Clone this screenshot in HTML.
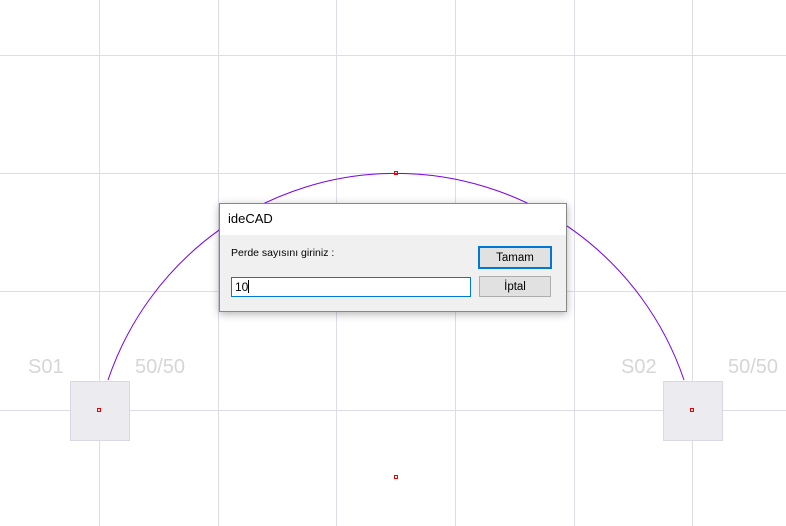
<!DOCTYPE html>
<html><head><style>
body{margin:0;width:786px;height:526px;overflow:hidden;background:#fff;font-family:"Liberation Sans",sans-serif;position:relative}
.t{position:absolute;font-size:20px;color:#d6d6d6;top:356px}
.dlg{position:absolute;left:219px;top:203px;width:346px;height:107px;border:1px solid #888;background:#f0f0f0;box-shadow:0 2px 8px rgba(0,0,0,.3)}
.tb{height:31px;background:#fff;font-size:13px;line-height:30px;padding-left:8px;color:#000}
.lbl{position:absolute;left:11px;top:43px;font-size:10.5px}
.btn{position:absolute;width:72px;height:21px;background:#e1e1e1;border:1px solid #adadad;box-sizing:border-box;font-size:11.5px;text-align:center;line-height:19px}
.inp{position:absolute;left:11px;top:73px;width:240px;height:20px;background:#fff;border:1px solid #0078d7;box-sizing:border-box;font-size:12px;line-height:18px;padding-left:3px}
.cur{display:inline-block;width:1px;height:13px;background:#000;vertical-align:-2px}
</style></head><body>
<svg width="786" height="526" style="position:absolute;left:0;top:0">
<g stroke="#dcdcec" stroke-width="1">
<line x1="99.5" y1="0" x2="99.5" y2="526"/><line x1="218.5" y1="0" x2="218.5" y2="526"/><line x1="336.5" y1="0" x2="336.5" y2="526"/><line x1="455.5" y1="0" x2="455.5" y2="526"/><line x1="574.5" y1="0" x2="574.5" y2="526"/><line x1="692.5" y1="0" x2="692.5" y2="526"/>
<line x1="0" y1="55.5" x2="786" y2="55.5"/><line x1="0" y1="173.5" x2="786" y2="173.5"/><line x1="0" y1="291.5" x2="786" y2="291.5"/><line x1="0" y1="410.5" x2="786" y2="410.5"/>
</g>
<rect x="70.5" y="381.5" width="59" height="59" fill="#ebebf0" stroke="#d8d8e6"/>
<rect x="663.5" y="381.5" width="59" height="59" fill="#ebebf0" stroke="#d8d8e6"/>
<path d="M108 380 A304 304 0 0 1 684 380" fill="none" stroke="#7a00e6" stroke-width="1"/>
<rect x="97.5" y="408.5" width="3" height="3" fill="none" stroke="#e00" stroke-width="1"/>
<rect x="690.5" y="408.5" width="3" height="3" fill="none" stroke="#e00" stroke-width="1"/>
<rect x="394.5" y="171.5" width="3" height="3" fill="none" stroke="#e00" stroke-width="1"/>
<rect x="394.5" y="475.5" width="3" height="3" fill="none" stroke="#e00" stroke-width="1"/>
</svg>
<div class="t" style="left:28px">S01</div>
<div class="t" style="left:135px">50/50</div>
<div class="t" style="left:621px">S02</div>
<div class="t" style="left:728px">50/50</div>
<div class="dlg">
<div class="tb">ideCAD</div>
<div class="lbl">Perde sayısını giriniz :</div>
<div class="btn" style="left:258px;top:42px;width:74px;height:23px;border:2px solid #0078d7;line-height:20px">Tamam</div>
<div class="inp">10<span class="cur"></span></div>
<div class="btn" style="left:259px;top:72px;line-height:21px">İptal</div>
</div>
</body></html>
